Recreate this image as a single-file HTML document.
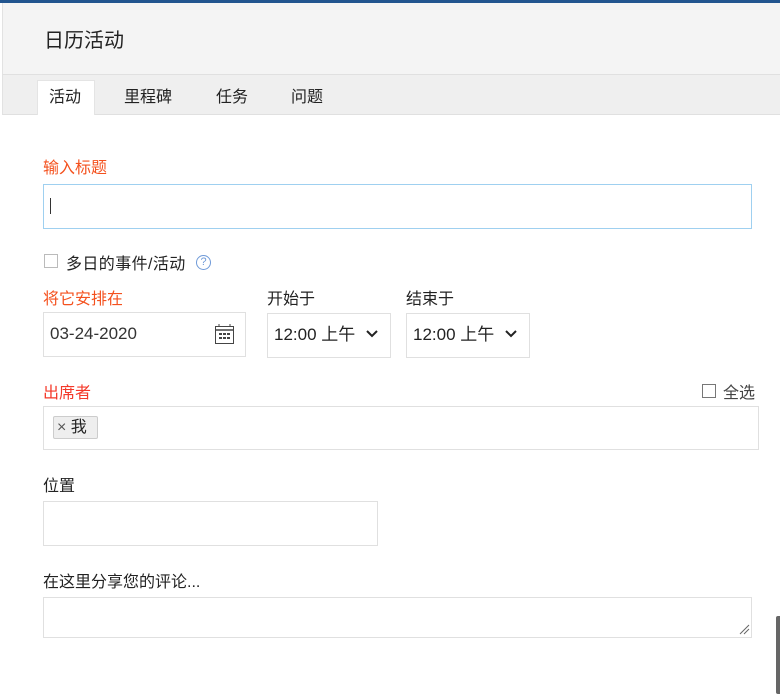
<!DOCTYPE html>
<html><head><meta charset="utf-8"><style>
*{box-sizing:border-box;margin:0;padding:0}
body{width:780px;height:694px;overflow:hidden;background:#fff;font-family:"Liberation Sans","Noto Sans CJK SC",sans-serif;color:#222;position:relative}
.a{position:absolute}
.lbl{font-size:16px;line-height:20px}
.red{color:#f4511e}
.box{border:1px solid #e0e0e0;background:#fff}
</style></head><body>
<div class="a" style="left:0;top:0;width:780px;height:3px;background:#22558f"></div>
<div class="a" style="left:2px;top:3px;width:778px;height:71px;background:#f4f4f4;border-left:1px solid #e2e2e2"></div>
<div class="a" style="left:44px;top:28px;font-size:20px;line-height:26px;color:#222">日历活动</div>
<div class="a" style="left:2px;top:74px;width:778px;height:41px;background:#efefef;border-top:1px solid #e0e0e0;border-bottom:1px solid #e0e0e0;border-left:1px solid #e2e2e2"></div>
<div class="a" style="left:37px;top:80px;width:58px;height:35px;background:#fff;border:1px solid #e4e4e4;border-bottom:none"></div>
<div class="a lbl" style="left:49px;top:88px">活动</div>
<div class="a lbl" style="left:124px;top:88px">里程碑</div>
<div class="a lbl" style="left:216px;top:88px">任务</div>
<div class="a lbl" style="left:291px;top:88px">问题</div>

<div class="a lbl red" style="left:43px;top:159px">输入标题</div>
<div class="a" style="left:43px;top:184px;width:709px;height:45px;border:1px solid #9fd0f0"></div>
<div class="a" style="left:50px;top:198px;width:1px;height:16px;background:#333"></div>

<div class="a" style="left:44px;top:254px;width:14px;height:14px;border:1px solid #bbb"></div>
<div class="a lbl" style="left:66px;top:255px;letter-spacing:0.4px">多日的事件/活动</div>
<div class="a" style="left:196px;top:255px;width:15px;height:15px;border:1px solid #6f9ad8;border-radius:50%;color:#6f9ad8;font-size:11px;line-height:13px;text-align:center">?</div>

<div class="a lbl red" style="left:43px;top:290px">将它安排在</div>
<div class="a lbl" style="left:267px;top:290px">开始于</div>
<div class="a lbl" style="left:406px;top:290px">结束于</div>
<div class="a box" style="left:43px;top:312px;width:203px;height:45px"></div>
<div class="a lbl" style="left:50px;top:324px;color:#333;font-size:17px">03-24-2020</div>
<svg class="a" style="left:215px;top:324px" width="19" height="20" viewBox="0 0 19 20"><rect x="0.5" y="2.5" width="18" height="17" fill="none" stroke="#444"/><line x1="0" y1="6" x2="19" y2="6" stroke="#444" stroke-width="1.5"/><line x1="4" y1="0" x2="4" y2="3" stroke="#444"/><line x1="15" y1="0" x2="15" y2="3" stroke="#444"/><g fill="#444"><rect x="4" y="9" width="3" height="2"/><rect x="8" y="9" width="3" height="2"/><rect x="12" y="9" width="3" height="2"/><rect x="4" y="13" width="3" height="2"/><rect x="8" y="13" width="3" height="2"/><rect x="12" y="13" width="3" height="2"/></g></svg>
<div class="a box" style="left:267px;top:313px;width:124px;height:45px"></div>
<div class="a lbl" style="left:274px;top:325px;font-size:17px">12:00 上午</div>
<svg class="a" style="left:366px;top:330px" width="12" height="8"><path d="M1 1L6 6L11 1" fill="none" stroke="#222" stroke-width="2"/></svg>
<div class="a box" style="left:406px;top:313px;width:124px;height:45px"></div>
<div class="a lbl" style="left:413px;top:325px;font-size:17px">12:00 上午</div>
<svg class="a" style="left:505px;top:330px" width="12" height="8"><path d="M1 1L6 6L11 1" fill="none" stroke="#222" stroke-width="2"/></svg>

<div class="a lbl red" style="left:43px;top:384px;color:#f4392a">出席者</div>
<div class="a" style="left:702px;top:384px;width:14px;height:14px;border:1px solid #777"></div>
<div class="a lbl" style="left:723px;top:384px;color:#444">全选</div>
<div class="a box" style="left:43px;top:406px;width:716px;height:44px"></div>
<div class="a" style="left:53px;top:416px;width:45px;height:23px;background:#eee;border:1px solid #ccc;border-radius:2px"></div>
<div class="a lbl" style="left:57px;top:418px;color:#555">× <span style="color:#222">我</span></div>

<div class="a lbl" style="left:43px;top:477px">位置</div>
<div class="a box" style="left:43px;top:501px;width:335px;height:45px"></div>

<div class="a lbl" style="left:43px;top:573px">在这里分享您的评论...</div>
<div class="a box" style="left:43px;top:597px;width:709px;height:41px"></div>
<svg class="a" style="left:739px;top:624px" width="11" height="11"><path d="M1 10L10 1M5 10L10 5" stroke="#666"/></svg>

<div class="a" style="left:776px;top:616px;width:4px;height:78px;background:#666;border-radius:2px 0 0 2px"></div>
</body></html>
